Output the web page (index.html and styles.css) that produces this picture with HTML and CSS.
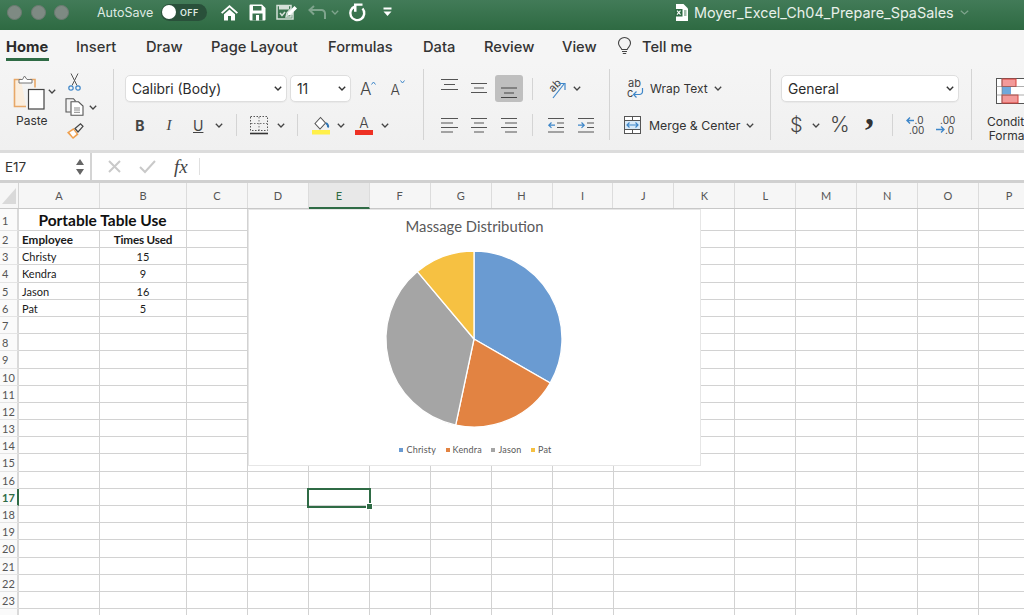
FILE: index.html
```html
<!DOCTYPE html>
<html lang="en">
<head>
<meta charset="utf-8">
<title>Moyer_Excel_Ch04_Prepare_SpaSales</title>
<link rel="stylesheet" href="styles.css">
</head>
<body>
<div class="app">
  <header class="titlebar">
    <div class="lights"><span class="light"></span><span class="light"></span><span class="light"></span></div>
    <span class="autosave">AutoSave</span>
    <div class="toggle"><span class="knob"></span><span class="off">OFF</span></div>
    <svg class="qat q-home" width="19" height="17" viewBox="0 0 19 17"><path d="M9.5 1 1 8.6l1.3 1.2L9.5 3.4l7.2 6.4L18 8.6z" fill="#fff"/><path d="M4 10.2 9.5 5.400l5.500 4.800V16.500h-4v-4.500H8V16.500H4z" fill="#fff"/></svg>
    <svg class="qat q-save" width="17" height="17" viewBox="0 0 17 17"><path d="M1.500 0.500h11.500l3.500 3.500v11.500a1 1 0 0 1-1 1h-14a1 1 0 0 1-1-1v-14a1 1 0 0 1 1-1z" fill="#fff"/><rect x="4" y="2" width="8.500" height="4.500" fill="#3b7450"/><rect x="3.500" y="9.500" width="10" height="7" fill="#3b7450"/><rect x="7" y="11" width="3" height="5.500" fill="#fff"/></svg>
    <svg class="qat q-edit" width="22" height="17" viewBox="0 0 22 17"><path d="M1 1.500h14v3l-4 4.500-1 4h5v-2l2-2v6H1z" fill="none" stroke="#d4e0d8" stroke-width="1.500"/><path d="M3 1.500h10v4H3z" fill="#d4e0d8"/><path d="M4 9l2 2.500 3-3.500" fill="none" stroke="#d4e0d8" stroke-width="1.500"/><path d="M11 12l1-3.500L18.500 2l2.500 2.500L14.500 11z" fill="#fff"/></svg>
    <svg class="qat q-undo" width="19" height="15" viewBox="0 0 19 15"><path d="M18 14V8.500a3.500 3.500 0 0 0-3.500-3.500H2.500M7 1 2.500 5 7 9.500" fill="none" stroke="#7fa48d" stroke-width="2"/></svg>
    <svg class="chev q-uc" width="8" height="5" viewBox="0 0 8 5"><path d="M.8.800 4 4l3.200-3.200" fill="none" stroke="#7fa48d" stroke-width="1.300"/></svg>
    <svg class="qat q-redo" width="18" height="19" viewBox="0 0 18 19"><path d="M6 3.500A7 7 0 1 0 13.500 5.500" fill="none" stroke="#fff" stroke-width="2.400"/><path d="M5 0.500h8.500v2.200H7.500v6H5z" fill="#fff"/></svg>
    <svg class="qat q-more" width="9" height="10" viewBox="0 0 9 10"><rect x="0.500" y="0.500" width="8" height="2" fill="#fff"/><path d="M0.500 4.500h8L4.500 9z" fill="#fff"/></svg>
    <svg class="q-doc" width="13" height="17" viewBox="0 0 13 17"><path d="M1 0h7.500L13 4.500V17H1z" fill="#fff"/><rect x="0" y="5" width="7.500" height="7.500" fill="#2f6b45"/><path d="M2 6.700l3.500 4M5.500 6.700 2 10.700" stroke="#fff" stroke-width="1.100"/><path d="M9 7h2.500M9 9h2.500M9 11h2.500" stroke="#2f6b45" stroke-width="0.900"/></svg>
    <span class="doctitle">Moyer_Excel_Ch04_Prepare_SpaSales</span>
    <svg class="chev q-dc" width="9" height="5" viewBox="0 0 9 5"><path d="M.8.800 4.500 4 8.200.800" fill="none" stroke="#7fa48d" stroke-width="1.200"/></svg>
  </header>

  <nav class="tabs">
    <span class="tab active">Home</span>
    <span class="tab t-insert">Insert</span>
    <span class="tab t-draw">Draw</span>
    <span class="tab t-layout">Page Layout</span>
    <span class="tab t-formulas">Formulas</span>
    <span class="tab t-data">Data</span>
    <span class="tab t-review">Review</span>
    <span class="tab t-view">View</span>
    <svg class="t-bulb" width="15" height="19" viewBox="0 0 15 19"><path d="M4.800 12.500C4.500 10.500 1.500 9.500 1.500 6.300a6 5.800 0 0 1 12 0c0 3.200-3 4.200-3.300 6.200z" fill="none" stroke="#444" stroke-width="1.100"/><path d="M5 14.500h5M5.800 16.500h3.400" stroke="#444" stroke-width="1.100"/></svg>
    <span class="tab t-tell">Tell me</span>
  </nav>

  <section class="ribbon">
    <div class="group g-clip">
      <div class="paste">
        <svg width="33" height="36" viewBox="0 0 33 36"><path d="M8 4.500H1.500v27H13" fill="#fbeede" stroke="#e8a868" stroke-width="1.600"/><path d="M17 4.500h5v8" fill="none" stroke="#e8a868" stroke-width="1.600"/><path d="M6 8V4.500h3.500L11.500 1l2.500 3.500H19V8z" fill="#fff" stroke="#777" stroke-width="1"/><rect x="15.500" y="14.500" width="15.500" height="19.500" fill="#fff" stroke="#444" stroke-width="1.200"/></svg>
        <span class="paste-label">Paste</span>
      </div>
      <svg class="chev c-paste" width="8" height="5" viewBox="0 0 8 5"><path d="M.8.800 4 4l3.200-3.200" fill="none" stroke="#444" stroke-width="1.300"/></svg>
      <div class="clip-tools">
        <svg class="t-cut" width="13" height="18" viewBox="0 0 13 18"><path d="M3 0.500 9 12.500M10 0.500 4 12.500" fill="none" stroke="#555" stroke-width="1"/><circle cx="3" cy="15" r="2.200" fill="none" stroke="#3f87c9" stroke-width="1.200"/><circle cx="10" cy="15" r="2.200" fill="none" stroke="#3f87c9" stroke-width="1.200"/></svg>
        <div class="copy-row">
          <svg width="19" height="18" viewBox="0 0 19 18"><path d="M5.500 14H1V.700h7.500l2 2.500" fill="none" stroke="#555" stroke-width="1.100"/><path d="M6 3.800h7.500L18 8v9.300H6z" fill="#fff" stroke="#555" stroke-width="1.100"/><path d="M9 10h6M9 12h6M9 14.300h6" stroke="#888" stroke-width="1"/></svg>
          <svg class="chev c-copy" width="8" height="5" viewBox="0 0 8 5"><path d="M.8.800 4 4l3.200-3.200" fill="none" stroke="#444" stroke-width="1.300"/></svg>
        </div>
        <svg class="t-brush" width="18" height="17" viewBox="0 0 18 17"><path d="M1 9.500 7.500 5l5 6.500L7 16z" fill="#f0a04e"/><path d="M3.500 9.500 7.500 7l3 4-3.500 3z" fill="#fff"/><path d="M9 5.500 14.500 .800 17 3.300 12 9z" fill="none" stroke="#444" stroke-width="1.200"/></svg>
      </div>
    </div>

    <div class="group g-font">
      <div class="rrow">
        <div class="combo c-font"><span>Calibri (Body)</span><svg class="chev" width="8" height="5" viewBox="0 0 8 5"><path d="M.8.800 4 4l3.200-3.200" fill="none" stroke="#333" stroke-width="1.400"/></svg></div>
        <div class="combo c-size ml3"><span>11</span><svg class="chev" width="8" height="5" viewBox="0 0 8 5"><path d="M.8.800 4 4l3.200-3.200" fill="none" stroke="#333" stroke-width="1.400"/></svg></div>
        <div class="grow ml9"><span class="bigA">A</span><svg class="caret" width="5" height="4" viewBox="0 0 5 4"><path d="M.5 3.500 2.500 1l2 2.500" fill="none" stroke="#3f87c9" stroke-width="1"/></svg></div>
        <div class="grow ml14"><span class="smallA">A</span><svg class="caret down" width="5" height="4" viewBox="0 0 5 4"><path d="M.5.500 2.500 3l2-2.500" fill="none" stroke="#3f87c9" stroke-width="1"/></svg></div>
      </div>
      <div class="rrow lower">
        <span class="fmt bold ml10">B</span>
        <span class="fmt ital ml20">I</span>
        <span class="fmt under ml20">U</span>
        <svg class="chev ml12" width="8" height="5" viewBox="0 0 8 5"><path d="M.8.800 4 4l3.200-3.200" fill="none" stroke="#444" stroke-width="1.300"/></svg>
        <span class="sep ml13"></span>
        <svg class="ml13" width="18" height="19" viewBox="0 0 18 19"><rect x=".5" y=".5" width="17" height="14" fill="none" stroke="#555" stroke-dasharray="1.500 1.500"/><path d="M9 1v13M1 7.500h16" stroke="#777" stroke-dasharray="1.500 1.500"/><path d="M0 17.500h18" stroke="#333" stroke-width="1.600"/></svg>
        <svg class="chev ml9" width="8" height="5" viewBox="0 0 8 5"><path d="M.8.800 4 4l3.200-3.200" fill="none" stroke="#444" stroke-width="1.300"/></svg>
        <span class="sep ml12"></span>
        <svg class="ml14" width="18" height="20" viewBox="0 0 18 20"><path d="M3 8.500 8.500 2.500l5 5.500L8 14z" fill="#fff" stroke="#555" stroke-width="1.100"/><path d="M14 8c2 1.500 2.500 3 2 4.500" fill="none" stroke="#2f75b5" stroke-width="2"/><rect x="0" y="15" width="18" height="4.500" fill="#fff04a"/></svg>
        <svg class="chev ml7" width="8" height="5" viewBox="0 0 8 5"><path d="M.8.800 4 4l3.200-3.200" fill="none" stroke="#444" stroke-width="1.300"/></svg>
        <div class="colorA ml10"><span>A</span><i></i></div>
        <svg class="chev ml8" width="8" height="5" viewBox="0 0 8 5"><path d="M.8.800 4 4l3.200-3.200" fill="none" stroke="#444" stroke-width="1.300"/></svg>
      </div>
    </div>

    <div class="group g-align">
      <div class="rrow">
        <svg width="17" height="27" viewBox="0 0 17 27"><path d="M0 4.500h17M3 9.500h11M0 14.500h17" stroke="#555" stroke-width="1.200"/></svg>
        <svg class="ml13" width="16" height="27" viewBox="0 0 16 27"><path d="M0 8.500h16M3 13h10M0 17.500h16" stroke="#555" stroke-width="1.200"/></svg>
        <div class="active-btn ml8"><svg width="16" height="27" viewBox="0 0 16 27"><path d="M0 13h16M3 18h10M0 22.500h16" stroke="#444" stroke-width="1.200"/></svg></div>
        <span class="sep short ml9"></span>
        <svg class="ml14" width="19" height="24" viewBox="0 0 19 24"><text x="2" y="14" class="svgtxt" transform="rotate(-45 6 10)">ab</text><path d="M6 21 17 7" stroke="#3f87c9" stroke-width="1.200"/><path d="M11.500 6.500H18V13" fill="none" stroke="#3f87c9" stroke-width="1.200"/></svg>
        <svg class="chev ml7" width="8" height="5" viewBox="0 0 8 5"><path d="M.8.800 4 4l3.200-3.200" fill="none" stroke="#444" stroke-width="1.300"/></svg>
      </div>
      <div class="rrow lower">
        <svg width="17" height="18" viewBox="0 0 17 18"><path d="M0 2.500h17M0 7h12M0 11.500h17M0 16h12" stroke="#555" stroke-width="1.200"/></svg>
        <svg class="ml13" width="16" height="18" viewBox="0 0 16 18"><path d="M0 2.500h16M3 7h10M0 11.500h16M3 16h10" stroke="#555" stroke-width="1.200"/></svg>
        <svg class="ml14" width="16" height="18" viewBox="0 0 16 18"><path d="M0 2.500h16M4 7h12M0 11.500h16M4 16h12" stroke="#555" stroke-width="1.200"/></svg>
        <span class="sep ml15"></span>
        <svg class="ml15" width="16" height="18" viewBox="0 0 16 18"><path d="M0 2.500h16M0 16h16M9 7h7M9 11.500h7" stroke="#555" stroke-width="1.200"/><path d="M7 9.200H.8M3.500 6.500.8 9.200l2.700 2.700" fill="none" stroke="#3f87c9" stroke-width="1.200"/></svg>
        <svg class="ml14" width="16" height="18" viewBox="0 0 16 18"><path d="M0 2.500h16M0 16h16M9 7h7M9 11.500h7" stroke="#555" stroke-width="1.200"/><path d="M0 9.200h6.200M3.500 6.500l2.700 2.700-2.700 2.700" fill="none" stroke="#3f87c9" stroke-width="1.200"/></svg>
      </div>
    </div>

    <div class="group g-wrap">
      <div class="rrow">
        <svg class="ml17" width="17" height="24" viewBox="0 0 17 24"><text x="1" y="10" class="svgtxt">ab</text><text x="0" y="20" class="svgtxt">c</text><path d="M15.500 11v3.500a3 3 0 0 1-3 3H6.500M9.500 14.500l-3 3 3 3" fill="none" stroke="#3f87c9" stroke-width="1.200"/></svg>
        <span class="rlabel ml6">Wrap Text</span>
        <svg class="chev wrap-ch" width="8" height="5" viewBox="0 0 8 5"><path d="M.8.800 4 4l3.200-3.200" fill="none" stroke="#444" stroke-width="1.300"/></svg>
      </div>
      <div class="rrow lower">
        <svg class="ml14" width="17" height="18" viewBox="0 0 17 18"><rect x=".5" y=".5" width="16" height="17" fill="#fff" stroke="#555"/><path d="M0 4.500h17M0 13.500h17M8.500 0v4M8.500 14v4" stroke="#555"/><rect x="1" y="5" width="15" height="8" fill="#d8e9f7"/><path d="M3 9h11M5.500 6.500 3 9l2.500 2.500M11.500 6.500 14 9l-2.500 2.500" fill="none" stroke="#3f87c9" stroke-width="1.200"/></svg>
        <span class="rlabel merge ml8">Merge &amp; Center</span>
        <svg class="chev merge-ch" width="8" height="5" viewBox="0 0 8 5"><path d="M.8.800 4 4l3.200-3.200" fill="none" stroke="#444" stroke-width="1.300"/></svg>
      </div>
    </div>

    <div class="group g-num">
      <div class="rrow">
        <div class="combo c-general ml10"><span>General</span><svg class="chev" width="8" height="5" viewBox="0 0 8 5"><path d="M.8.800 4 4l3.200-3.200" fill="none" stroke="#333" stroke-width="1.400"/></svg></div>
      </div>
      <div class="rrow lower">
        <span class="numsym dollar ml19">$</span>
        <svg class="chev ml13" width="8" height="5" viewBox="0 0 8 5"><path d="M.8.800 4 4l3.200-3.200" fill="none" stroke="#444" stroke-width="1.300"/></svg>
        <span class="numsym pct ml10">%</span>
        <span class="numsym comma ml17">,</span>
        <span class="sep ml18"></span>
        <svg class="ml13" width="19" height="20" viewBox="0 0 19 20"><path d="M8 5.500H1M4 2.500 1 5.500l3 3" fill="none" stroke="#3f87c9" stroke-width="1.400"/><text x="8.500" y="9" class="svgnum">.0</text><text x="3" y="18.500" class="svgnum">.00</text></svg>
        <svg class="ml11" width="19" height="20" viewBox="0 0 19 20"><text x="4" y="9" class="svgnum">.00</text><path d="M0 14.500h8M5 11.500l3 3-3 3" fill="none" stroke="#3f87c9" stroke-width="1.400"/><text x="9" y="18.500" class="svgnum">.0</text></svg>
      </div>
    </div>

    <div class="group g-cond">
      <svg class="cond-icon" width="32" height="26" viewBox="0 0 32 26"><rect x=".5" y=".5" width="31" height="25" fill="#fff" stroke="#555"/><rect x="6" y="1" width="14" height="7.500" fill="#f29a9a" stroke="#d8403a"/><rect x="6" y="9" width="9" height="7.500" fill="#6fa8dc"/><rect x="6" y="17" width="16" height="8" fill="#f29a9a" stroke="#d8403a"/><path d="M6 0v26M0 8.500h32M0 17h32" stroke="#777" stroke-width=".6"/></svg>
      <div class="cond-label">Conditional<br>Formatting</div>
    </div>
  </section>

  <section class="formulabar">
    <div class="namebox"><span>E17</span>
      <svg width="10" height="20" viewBox="0 0 10 20"><path d="M5 2 9 8H1zM5 18 1 12h8z" fill="#666"/></svg>
    </div>
    <svg class="fb-x" width="13" height="13" viewBox="0 0 13 13"><path d="M1 1l11 11M12 1 1 12" stroke="#c9c9c9" stroke-width="2"/></svg>
    <svg class="fb-check" width="17" height="13" viewBox="0 0 17 13"><path d="M1 7l5 5L16 1" fill="none" stroke="#c9c9c9" stroke-width="2"/></svg>
    <span class="fx">fx</span>
    <span class="fb-sep"></span>
  </section>

  <section class="sheet">
    <div class="colhead">
      <div class="corner"><svg width="16" height="18" viewBox="0 0 16 18"><path d="M15 1v16H1z" fill="#d9d9d9"/></svg></div>
      <div class="ch w-a">A</div><div class="ch w-b">B</div><div class="ch">C</div><div class="ch">D</div><div class="ch sel">E</div><div class="ch">F</div><div class="ch">G</div><div class="ch">H</div><div class="ch">I</div><div class="ch">J</div><div class="ch">K</div><div class="ch">L</div><div class="ch">M</div><div class="ch">N</div><div class="ch">O</div><div class="ch">P</div>
    </div>
    <div class="rows">
      <div class="row first"><div class="rh">1</div><div class="merged">Portable Table Use</div><div class="rest"></div></div>
      <div class="row"><div class="rh">2</div><div class="c a strong">Employee</div><div class="c b strong tight">Times Used</div><div class="rest"></div></div>
      <div class="row"><div class="rh">3</div><div class="c a">Christy</div><div class="c b">15</div><div class="rest"></div></div>
      <div class="row"><div class="rh">4</div><div class="c a">Kendra</div><div class="c b">9</div><div class="rest"></div></div>
      <div class="row"><div class="rh">5</div><div class="c a">Jason</div><div class="c b">16</div><div class="rest"></div></div>
      <div class="row"><div class="rh">6</div><div class="c a">Pat</div><div class="c b">5</div><div class="rest"></div></div>
      <div class="row"><div class="rh">7</div><div class="c a"></div><div class="c b"></div><div class="rest"></div></div>
      <div class="row"><div class="rh">8</div><div class="c a"></div><div class="c b"></div><div class="rest"></div></div>
      <div class="row"><div class="rh">9</div><div class="c a"></div><div class="c b"></div><div class="rest"></div></div>
      <div class="row"><div class="rh">10</div><div class="c a"></div><div class="c b"></div><div class="rest"></div></div>
      <div class="row"><div class="rh">11</div><div class="c a"></div><div class="c b"></div><div class="rest"></div></div>
      <div class="row"><div class="rh">12</div><div class="c a"></div><div class="c b"></div><div class="rest"></div></div>
      <div class="row"><div class="rh">13</div><div class="c a"></div><div class="c b"></div><div class="rest"></div></div>
      <div class="row"><div class="rh">14</div><div class="c a"></div><div class="c b"></div><div class="rest"></div></div>
      <div class="row"><div class="rh">15</div><div class="c a"></div><div class="c b"></div><div class="rest"></div></div>
      <div class="row"><div class="rh">16</div><div class="c a"></div><div class="c b"></div><div class="rest"></div></div>
      <div class="row"><div class="rh cur">17</div><div class="c a"></div><div class="c b"></div><div class="rest"></div></div>
      <div class="row"><div class="rh">18</div><div class="c a"></div><div class="c b"></div><div class="rest"></div></div>
      <div class="row"><div class="rh">19</div><div class="c a"></div><div class="c b"></div><div class="rest"></div></div>
      <div class="row"><div class="rh">20</div><div class="c a"></div><div class="c b"></div><div class="rest"></div></div>
      <div class="row"><div class="rh">21</div><div class="c a"></div><div class="c b"></div><div class="rest"></div></div>
      <div class="row"><div class="rh">22</div><div class="c a"></div><div class="c b"></div><div class="rest"></div></div>
      <div class="row"><div class="rh">23</div><div class="c a"></div><div class="c b"></div><div class="rest"></div></div>
      <div class="row"><div class="rh"></div><div class="c a"></div><div class="c b"></div><div class="rest"></div></div>
    </div>

    <figure class="chart">
      <figcaption class="chart-title">Massage Distribution</figcaption>
      <svg class="pie" width="180" height="180" viewBox="-90 -90 180 180">
        <path d="M0 0V-88A88 88 0 0 1 76.200 44z" fill="#6a9bd2" stroke="#fff" stroke-width="1.300"/>
        <path d="M0 0 76.200 44A88 88 0 0 1-18.300 86.100z" fill="#e28342" stroke="#fff" stroke-width="1.300"/>
        <path d="M0 0-18.300 86.100A88 88 0 0 1-56.600-67.400z" fill="#a5a5a5" stroke="#fff" stroke-width="1.300"/>
        <path d="M0 0-56.600-67.400A88 88 0 0 1 0-88z" fill="#f6c142" stroke="#fff" stroke-width="1.300"/>
      </svg>
      <div class="legend">
        <span class="lg"><i class="k1"></i>Christy</span>
        <span class="lg"><i class="k2"></i>Kendra</span>
        <span class="lg"><i class="k3"></i>Jason</span>
        <span class="lg"><i class="k4"></i>Pat</span>
      </div>
    </figure>
    <div class="selection"><span class="handle"></span></div>
  </section>
</div>
</body>
</html>
```
FILE: styles.css
```css
* { box-sizing: border-box; }
html, body { margin: 0; height: 100%; overflow: hidden; background: #fff; }
body { font-family: "Inter", "Liberation Sans", sans-serif; color: #333; }
svg { flex-shrink: 0; display: block; overflow: visible; }
.app { width: 1024px; height: 615px; overflow: hidden; display: flex; flex-direction: column; }

/* title bar */
.titlebar { height: 30px; flex: none; display: flex; align-items: center; background: linear-gradient(#427b58, #2e6a42); padding-bottom: 6px; color: #dfeae3; }
.lights { display: flex; gap: 8.500px; margin-left: 7px; }
.light { width: 15px; height: 15px; border-radius: 50%; background: #7e8a83; border: 1px solid #6d7a72; }
.autosave { margin-left: 28px; font-size: 12.500px; width: 57px; white-space: nowrap; }
.toggle { margin-left: 7px; width: 46px; height: 17px; border-radius: 9px; background: #29503a; display: flex; align-items: center; }
.knob { width: 14px; height: 14px; border-radius: 50%; background: #fff; margin-left: 1px; }
.off { margin-left: 4px; font-size: 9px; font-weight: 600; letter-spacing: .4px; color: #dfeae3; }
.q-home { margin-left: 13px; }
.q-save { margin-left: 10px; }
.q-edit { margin-left: 10px; }
.q-undo { margin-left: 9px; }
.q-uc { margin-left: 5px; }
.q-redo { margin-left: 10px; }
.q-more { margin-left: 16px; }
.q-doc { margin-left: 283px; }
.doctitle { margin-left: 6px; font-size: 14.400px; width: 261px; white-space: nowrap; color: #e8f0ea; }
.q-dc { margin-left: 5px; }

/* tabs */
.tabs { height: 33px; flex: none; display: flex; align-items: flex-start; padding-left: 6px; background: #f5f5f5; }
.tab { font-size: 14.700px; line-height: 18px; padding: 8px 0 2px; white-space: nowrap; color: #333; font-weight: 500; }
.tab.active { font-weight: 700; border-bottom: 3px solid #2f6b45; color: #2b2b2b; width: 43px; }
.t-insert { margin-left: 27px; width: 41px; }
.t-draw { margin-left: 29px; width: 36px; }
.t-layout { margin-left: 29px; width: 87px; }
.t-formulas { margin-left: 30px; width: 65px; }
.t-data { margin-left: 30px; width: 32px; }
.t-review { margin-left: 29px; width: 49px; }
.t-view { margin-left: 29px; width: 34px; }
.t-bulb { margin: 7px 0 0 21px; }
.t-tell { margin-left: 10px; }

/* ribbon */
.ribbon { height: 87px; flex: none; display: flex; align-items: flex-start; padding-top: 6px; background: linear-gradient(#f5f5f5, #f0f0f0); overflow: hidden; }
.group { height: 71px; padding-top: 6px; border-right: 1px solid #d4d4d4; flex: none; position: relative; }
.g-clip { width: 114px; display: flex; align-items: flex-start; }
.g-font { width: 310px; padding-left: 11px; }
.g-align { width: 186px; padding-left: 17px; }
.g-wrap { width: 161px; }
.g-num { width: 201px; }
.g-cond { width: 94px; border-right: 0; padding-top: 9px; }
.rrow { display: flex; align-items: center; height: 27px; }
.rrow.lower { height: 26px; margin-top: 10px; }

.paste { width: 40px; margin-left: 13px; display: flex; flex-direction: column; }
.paste-label { font-size: 12px; line-height: 14px; margin: 3px 0 0 3px; color: #333; }
.c-paste { margin: 14px 0 0 -5px; }
.clip-tools { margin-left: 9px; display: flex; flex-direction: column; align-items: flex-start; }
.t-cut { margin: -2px 0 0 3px; }
.copy-row { display: flex; align-items: center; margin-top: 7px; }
.c-copy { margin-left: 5px; }
.t-brush { margin: 7px 0 0 1px; }

.combo { height: 27px; background: #fff; border: 1px solid #dedede; border-radius: 5px; display: flex; align-items: center; justify-content: space-between; padding: 0 4px 0 6px; font-size: 13.800px; color: #2b2b2b; box-shadow: 0 1px 1px rgba(0,0,0,.04); }
.c-font { width: 162px; }
.c-size { width: 61px; }
.c-general { width: 178px; }
.grow { display: flex; align-items: flex-start; height: 22px; color: #444; }
.bigA { font-size: 17px; line-height: 22px; font-weight: 300; }
.smallA { font-size: 14px; line-height: 24px; font-weight: 300; }
.caret { margin-top: 3px; }
.caret.down { margin-top: 2px; }
.fmt { width: 10px; text-align: center; font-size: 14px; color: #444; }
.bold { font-weight: 700; }
.ital { width: 8px; font-style: italic; font-family: "Liberation Serif", serif; font-size: 15px; }
.under { text-decoration: underline; }
.sep { width: 1px; height: 22px; background: #d4d4d4; flex: none; }
.colorA { width: 18px; height: 20px; display: flex; flex-direction: column; align-items: center; font-size: 14px; line-height: 15px; font-weight: 300; color: #444; }
.colorA i { width: 18px; height: 4.500px; background: #ee3124; display: block; }
.active-btn { width: 28px; height: 27px; border-radius: 3px; background: #bfbfbf; display: flex; justify-content: center; }
.svgtxt { font-size: 11px; fill: #444; font-family: "Inter", sans-serif; }
.svgnum { font-size: 10px; fill: #444; font-family: "Inter", sans-serif; }
.rlabel { font-size: 12px; white-space: nowrap; color: #333; }
.rlabel.merge { font-size: 12.300px; }
.wrap-ch { margin-left: 6px; }
.merge-ch { margin-left: 6px; }
.numsym { color: #444; text-align: center; }
.dollar { width: 9px; font-size: 20px; font-weight: 300; line-height: 22px; }
.pct { width: 18px; font-size: 21px; font-weight: 300; line-height: 22px; }
.comma { width: 9px; font-family: "Liberation Serif", serif; font-size: 36px; font-weight: 700; line-height: 20px; position: relative; top: -13px; color: #333; }
.cond-icon { margin-left: 24px; }
.cond-label { font-size: 12px; line-height: 14px; text-align: center; margin-top: 11px; white-space: nowrap; color: #333; }

.ml3 { margin-left: 3px; } .ml6 { margin-left: 6px; } .ml7 { margin-left: 7px; } .ml8 { margin-left: 8px; }
.ml9 { margin-left: 9px; } .ml10 { margin-left: 10px; } .ml11 { margin-left: 11px; } .ml12 { margin-left: 12px; }
.ml13 { margin-left: 13px; } .ml14 { margin-left: 14px; } .ml15 { margin-left: 15px; } .ml17 { margin-left: 17px; }
.ml18 { margin-left: 18px; } .ml19 { margin-left: 19px; } .ml20 { margin-left: 20px; }

/* formula bar */
.formulabar { height: 33px; flex: none; display: flex; align-items: center; background: #fff; border-top: 3px solid #dcdcdc; border-bottom: 3px solid #d0d0d0; }
.namebox { width: 92px; height: 27px; display: flex; align-items: center; justify-content: space-between; padding: 0 5px 0 5px; font-size: 13.500px; color: #333; border-right: 2px solid #d4d4d4; background: #fff; }
.fb-x { margin-left: 16px; }
.fb-check { margin-left: 18px; }
.fx { margin-left: 18px; width: 17px; font-family: "Liberation Serif", serif; font-style: italic; font-size: 19px; color: #444; }
.fb-sep { margin-left: 8px; width: 1px; height: 17px; background: #e0e0e0; }

/* sheet */
.sheet { flex: 1; position: relative; overflow: hidden; font-family: "Lato", sans-serif; }
.colhead { height: 26px; display: flex; background: #f6f6f6; border-bottom: 1px solid #c8c8c8; }
.corner { width: 19px; flex: none; padding: 4px 0 0 1px; border-right: 1px solid #d4d4d4; }
.ch { width: 60.930px; flex: none; font-size: 11px; line-height: 25px; text-align: center; color: #555; border-right: 1px solid #dcdcdc; }
.ch.w-a { width: 81px; }
.ch.w-b { width: 87px; }
.ch.sel { background: #e8e8e8; color: #2f6b45; border-bottom: 2px solid #2f6b45; height: 26px; }
.row { height: 17.200px; display: flex; }
.row.first { height: 22px; }
.rh { width: 19px; flex: none; font-size: 11px; line-height: 18px; padding-left: 2px; color: #555; background: #fafafa; border-right: 2px solid #d9d9d9; border-bottom: 1px solid #e4e4e4; }
.rh.cur { color: #2f6b45; font-weight: 700; border-right-color: #2f6b45; }
.row.first .rh { line-height: 24px; }
.c { border-right: 1px solid #d2d2d2; border-bottom: 1px solid #d2d2d2; font-size: 11px; line-height: 18px; color: #1a1a1a; flex: none; white-space: nowrap; }
.a { width: 81px; padding-left: 3px; }
.b { width: 87px; text-align: center; }
.strong { font-weight: 700; font-size: 11.700px; line-height: 17px; }
.tight { letter-spacing: -.2px; }
.merged { width: 168px; flex: none; text-align: center; font-size: 15.500px; font-weight: 700; line-height: 22px; color: #111; border-right: 1px solid #d2d2d2; border-bottom: 1px solid #d2d2d2; }
.rest { flex: 1; border-bottom: 1px solid #d2d2d2; background: repeating-linear-gradient(to right, transparent 0 60px, #d2d2d2 60px 60.930px); }

.chart { position: absolute; left: 248px; top: 26px; width: 453px; height: 257px; margin: 0; background: #fff; border: 1px solid #e6e6e6; display: flex; flex-direction: column; align-items: center; }
.chart-title { font-size: 14.800px; line-height: 18px; margin-top: 7px; color: #595959; }
.pie { margin: 14px 1px 0 0; }
.legend { display: flex; gap: 9.500px; margin-top: 15px; padding-left: 2px; font-size: 9px; letter-spacing: .2px; line-height: 12px; color: #595959; }
.lg { display: flex; align-items: center; }
.lg i { width: 4px; height: 4px; margin-right: 3px; display: block; }
.k1 { background: #6a9bd2; } .k2 { background: #e28342; } .k3 { background: #a5a5a5; } .k4 { background: #f6c142; }

.selection { position: absolute; left: 307px; top: 305px; width: 64px; height: 20px; border: 2px solid #2f6b45; }
.handle { position: absolute; right: -4px; bottom: -4px; width: 7px; height: 7px; background: #2f6b45; border: 1px solid #fff; }
```
